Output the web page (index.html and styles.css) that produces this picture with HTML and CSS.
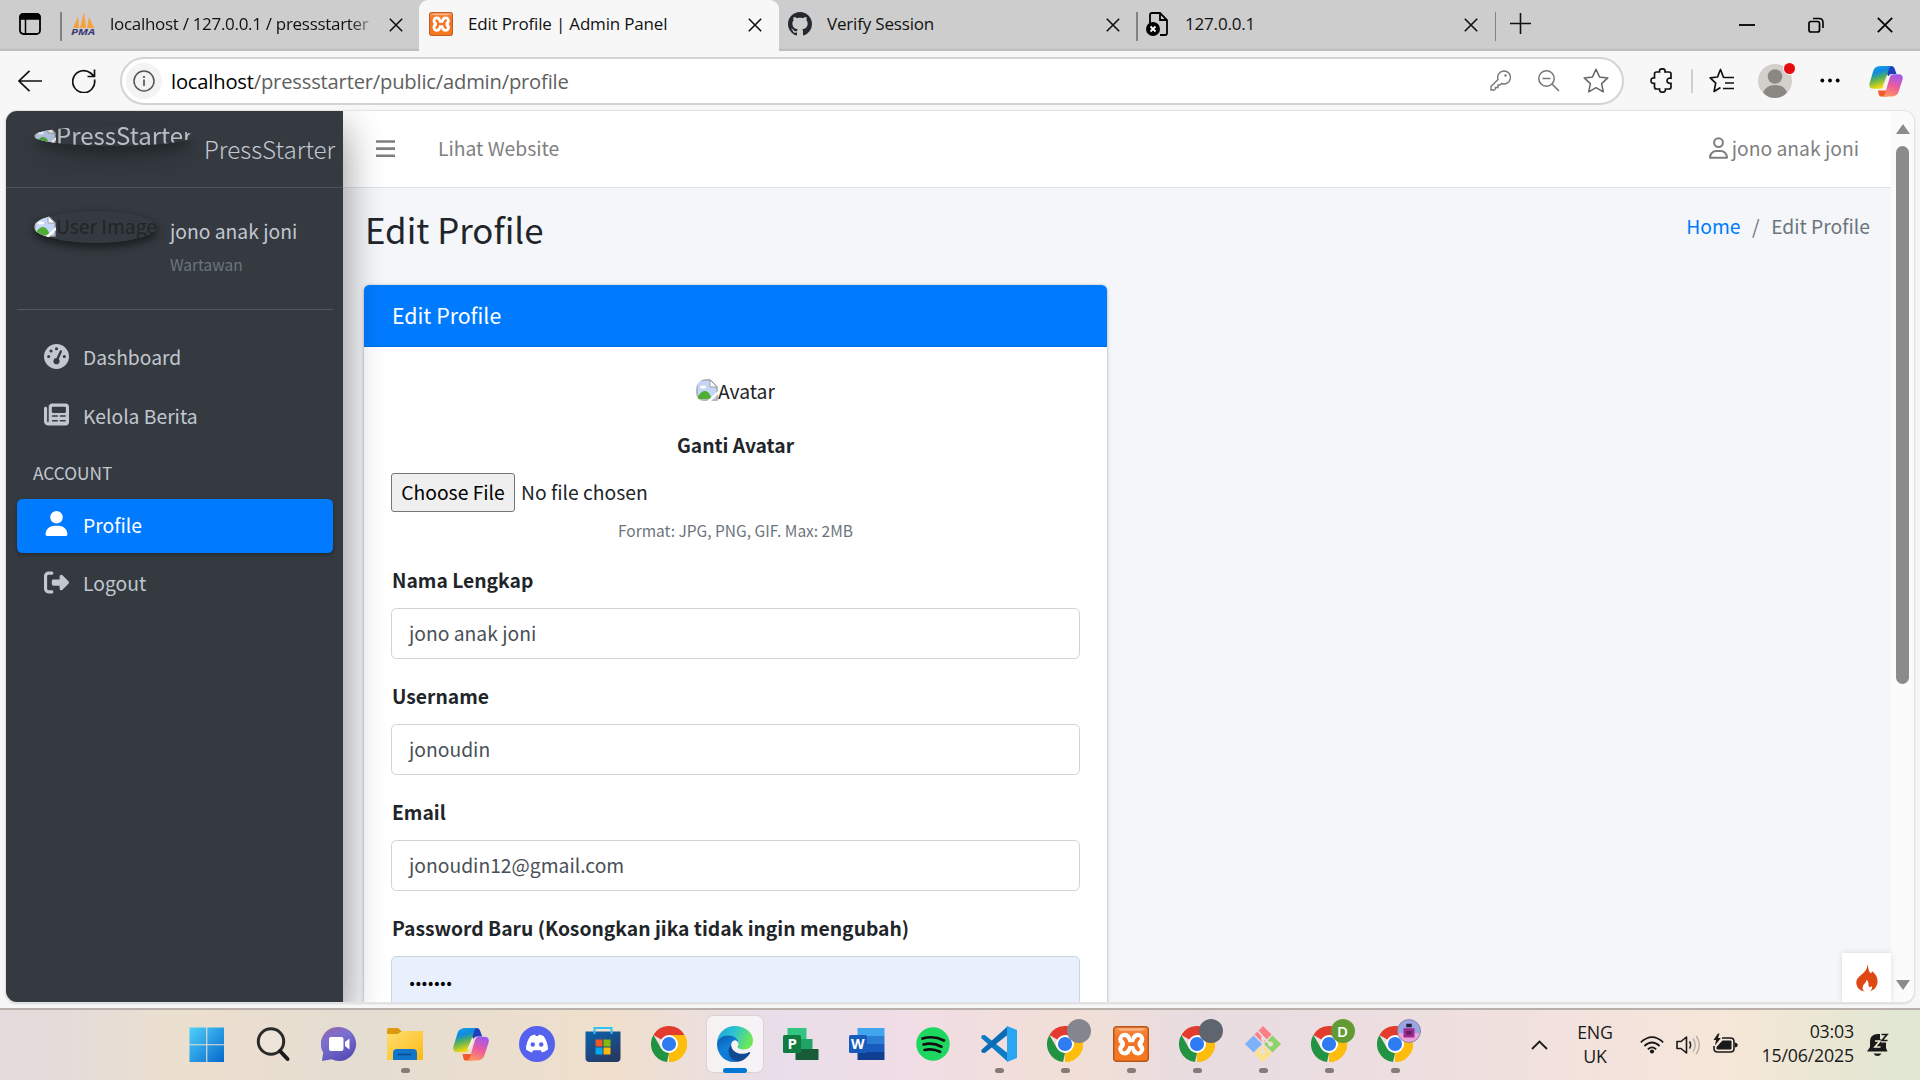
FILE: index.html
```html
<!DOCTYPE html>
<html lang="id">
<head>
<meta charset="utf-8">
<title>Edit Profile | Admin Panel</title>
<link rel="stylesheet" href="styles.css">
</head>
<body>
<svg class="defs" width="0" height="0" aria-hidden="true">
  <defs>
    <linearGradient id="cpA" x1="0" y1="0" x2="0.3" y2="1"><stop offset="0" stop-color="#1fa4ee"/><stop offset=".35" stop-color="#0d8be0"/><stop offset=".6" stop-color="#4fae62"/><stop offset="1" stop-color="#f5d90a"/></linearGradient>
    <linearGradient id="cpB" x1="0.5" y1="0" x2="0.2" y2="1"><stop offset="0" stop-color="#a558ea"/><stop offset=".5" stop-color="#ee5c9c"/><stop offset="1" stop-color="#fd9a5a"/></linearGradient>
    <linearGradient id="winG" x1="0" y1="0" x2="1" y2="1"><stop offset="0" stop-color="#4fd0fb"/><stop offset="1" stop-color="#0468cc"/></linearGradient>
    <linearGradient id="chatG" x1="0" y1="0" x2=".5" y2="1"><stop offset="0" stop-color="#9863a8"/><stop offset=".45" stop-color="#7a6fd0"/><stop offset="1" stop-color="#5a4fb8"/></linearGradient>
    <linearGradient id="foldG" x1="0" y1="0" x2="1" y2="1"><stop offset="0" stop-color="#ffdf70"/><stop offset="1" stop-color="#fbb916"/></linearGradient>
    <linearGradient id="storeG" x1="0" y1="0" x2=".6" y2="1"><stop offset="0" stop-color="#0a63ae"/><stop offset="1" stop-color="#263a66"/></linearGradient>
    <linearGradient id="edgeTop" x1="0" y1="0" x2="1" y2=".3"><stop offset="0" stop-color="#1f9fe0"/><stop offset=".5" stop-color="#2cc3d2"/><stop offset="1" stop-color="#6be65a"/></linearGradient>
    <linearGradient id="edgeMid" x1="0" y1="0" x2=".6" y2="1"><stop offset="0" stop-color="#0c59a4"/><stop offset=".5" stop-color="#0f80da"/><stop offset="1" stop-color="#1272cf"/></linearGradient>
    <linearGradient id="xamG" x1="0" y1="0" x2="0" y2="1"><stop offset="0" stop-color="#f9924a"/><stop offset=".3" stop-color="#f07427"/><stop offset="1" stop-color="#f47920"/></linearGradient>
    <symbol id="close" viewBox="0 0 14 14"><path d="M.8.8 13.2 13.2M13.2.8.8 13.2" fill="none" stroke="#111" stroke-width="1.6"/></symbol>
    <symbol id="xampp" viewBox="0 0 36 36"><rect x=".7" y=".7" width="34.6" height="34.6" rx="3" fill="url(#xamG)" stroke="#b8541a" stroke-width="1.4"/><path d="M4 2.500h28l-3 2H7z" fill="#fff" opacity=".4"/><g fill="#fff"><circle cx="11.800" cy="13.300" r="6.500"/><circle cx="11.800" cy="23" r="6.500"/><circle cx="24.800" cy="13.300" r="6.500"/><circle cx="24.800" cy="23" r="6.500"/><path d="M11 13h14.500v10H11z"/></g><path d="M11.300 12.800q2.500 1.700 2.500 5.300t-2.500 5.400M25.200 12.800q-2.500 1.700-2.500 5.300t2.500 5.400M14 18.100h8.500" fill="none" stroke="#f07427" stroke-width="3.600" stroke-linecap="round"/></symbol>
    <symbol id="copilot" viewBox="0 0 36 34"><path d="M15 1h8.500c2 0 3 1 3.700 3l2 5.500h-5c-2 0-3 1-3.600 3z" fill="#1d3fc0"/><path d="M9.500 27h9l3-10 2.500 5-3 9c-.6 1.700-1.500 2.500-3.200 2.500H13c-2 0-2.500-1-3.500-6.500z" fill="#f4582c"/><path d="M12.500 1H24c-2 .6-2.600 2-3.300 4.500L15.500 22c-.7 2.200-1.800 3.200-4 3.200H4.500C.8 25.200-.3 22.500.6 19L4.700 5.500C5.700 2.500 8.500 1 12.500 1z" fill="url(#cpA)"/><path d="M23.500 33.500H14c2-.4 2.600-2 3.300-4.300l4.700-16c.8-2.500 2-3.500 4.200-3.500h5.300c3.700 0 4.900 2.600 4 6l-4.200 13c-1 3.100-3.800 4.800-7.800 4.800z" fill="url(#cpB)"/><path d="m18.500 12.500-4.200 10c2.700-.5 3.700-1.500 4.400-3.800l1.500-5c.3-1 .8-1.900 1.600-2.600z" fill="#f3eeea"/></symbol>
    <symbol id="chrome" viewBox="0 0 36 36"><path d="M18 18 2.400 9A18 18 0 0 1 33.600 9z" fill="#e33b2e"/><path d="M18 18 33.600 9A18 18 0 0 1 18 36z" fill="#fdbd0a"/><path d="M2.400 9 10.200 22.500 18 27l-2 9A18 18 0 0 1 2.400 9z" fill="#229342"/><path d="M18 9h15.600A18 18 0 0 1 18 36l7.800-13.500z" fill="#fdbd0a"/><circle cx="18" cy="18" r="9" fill="#fff"/><circle cx="18" cy="18" r="7.100" fill="#2f7bf2"/></symbol>
    <symbol id="broken" viewBox="0 0 22 22"><path d="M1 1h13l7 7v13H1z" fill="#fff" stroke="#9aa0a6" stroke-width="1.500"/><path d="M2 2h12l6 6v12H2z" fill="#c4d5f5"/><path d="M14 1v7h7z" fill="#fff" stroke="#9aa0a6"/><path d="M2 20v-3c3-4 5-5 7-5 3 0 5 3 7 8z" fill="#4fae33"/><path d="m11 22 11-10v3l-7 7z" fill="#fff"/><ellipse cx="7" cy="8" rx="3" ry="1.500" fill="#fff"/></symbol>
  </defs>
</svg>

<div class="screen">
  <header class="tabs">
    <div class="workspace"><svg width="22" height="22" viewBox="0 0 22 22"><rect x="1" y="1" width="20" height="20" rx="3.500" fill="none" stroke="#000" stroke-width="1.800"/><path d="M1 6V4q0-3 3-3h14q3 0 3 3v2zM6.500 6v15" stroke="#000" stroke-width="1.500"/></svg></div>
    <div class="tab first">
      <svg class="fav" viewBox="0 0 24 24"><path d="M2 16 7 5l1 11zM9 16 13 0l2 16zM16 16l2-11 5 11z" fill="#f8a13c"/><text x="0" y="23" class="pma" textLength="24" lengthAdjust="spacingAndGlyphs">PMA</text></svg>
      <span class="title fade">localhost / 127.0.0.1 / pressstarter</span>
      <svg class="x"><use href="#close"/></svg>
    </div>
    <div class="tab active">
      <svg class="fav"><use href="#xampp"/></svg>
      <span class="title">Edit Profile | Admin Panel</span>
      <svg class="x"><use href="#close"/></svg>
    </div>
    <div class="tab">
      <svg class="fav" viewBox="0 0 16 16"><path fill="#24292f" d="M8 0C3.580 0 0 3.580 0 8c0 3.540 2.290 6.530 5.470 7.590.4.070.55-.17.55-.38 0-.19-.01-.82-.01-1.490-2.010.37-2.530-.49-2.690-.94-.09-.23-.48-.94-.82-1.130-.28-.15-.68-.52-.01-.53.63-.01 1.080.58 1.230.82.72 1.210 1.870.87 2.330.66.070-.52.28-.87.51-1.070-1.780-.2-3.640-.89-3.640-3.950 0-.87.31-1.590.82-2.150-.08-.2-.36-1.020.08-2.120 0 0 .67-.21 2.200.82.64-.18 1.320-.27 2-.27s1.360.09 2 .27c1.530-1.040 2.200-.82 2.200-.82.44 1.100.16 1.920.08 2.120.51.56.82 1.270.82 2.150 0 3.070-1.870 3.750-3.650 3.950.29.25.54.73.54 1.480 0 1.070-.01 1.930-.01 2.200 0 .21.15.46.55.38A8.010 8.010 0 0 0 16 8c0-4.420-3.580-8-8-8z"/></svg>
      <span class="title">Verify Session</span>
      <svg class="x"><use href="#close"/></svg>
    </div>
    <div class="tab divided">
      <svg class="fav" viewBox="0 0 24 24"><path d="M4 11V3q0-2 2-2h8l7 7v13q0 2-2 2h-5M14 1v7h7" fill="none" stroke="#000" stroke-width="1.800"/><circle cx="7" cy="17" r="7" fill="#000"/><path d="m4.500 14.500 5 5m0-5-5 5" stroke="#fff" stroke-width="1.800"/></svg>
      <span class="title">127.0.0.1</span>
      <svg class="x"><use href="#close"/></svg>
    </div>
    <svg class="plus" width="21" height="21"><path d="M10.500 0v21M0 10.500h21" stroke="#111" stroke-width="1.600"/></svg>
    <div class="winctl">
      <svg width="16" height="16"><path d="M0 8h16" stroke="#000" stroke-width="1.800"/></svg>
      <svg width="16" height="16" viewBox="0 0 16 16"><rect x="1" y="4.500" width="10.500" height="10.500" rx="2" fill="none" stroke="#000" stroke-width="1.700"/><path d="M5 1.500h6q4 0 4 4V11" fill="none" stroke="#000" stroke-width="1.600"/></svg>
      <svg width="16" height="16" viewBox="0 0 16 16"><path d="m.8.8 14.400 14.400m0-14.400L.8 15.200" stroke="#000" stroke-width="1.700"/></svg>
    </div>
  </header>

  <div class="toolbar">
    <svg class="back" width="24" height="22"><path d="M24 11H1M11.500.8 1 11l10.500 10.200" fill="none" stroke="#111" stroke-width="1.700"/></svg>
    <svg class="reload" width="24" height="24" viewBox="0 0 24 24"><path d="M22.500 10.500A11 11 0 1 1 18.500 4L22 7M22.500.5V7.500H15.500" fill="none" stroke="#111" stroke-width="1.700"/></svg>
    <div class="address">
      <span class="info"><svg width="22" height="22" viewBox="0 0 22 22"><circle cx="11" cy="11" r="10" fill="none" stroke="#555" stroke-width="1.500"/><path d="M11 9.500V16M11 6v2" stroke="#555" stroke-width="1.700"/></svg></span>
      <span class="url"><b>localhost</b>/pressstarter/public/admin/profile</span>
      <span class="addr-icons">
        <svg width="21" height="21" viewBox="0 0 21 21"><path d="M13.500 1a6.500 6.500 0 1 1-2 12.500L10 15H8v2.500H5.500V19L4 20H1v-3.500l7-7A6.500 6.500 0 0 1 13.500 1z" fill="none" stroke="#777" stroke-width="1.400"/><circle cx="15.500" cy="5.500" r="1.200" fill="#777"/></svg>
        <svg width="22" height="22" viewBox="0 0 22 22"><circle cx="8.500" cy="8.500" r="7.700" fill="none" stroke="#777" stroke-width="1.500"/><path d="M4.500 8.500h8M14 14l7 7" stroke="#777" stroke-width="1.600"/></svg>
        <svg class="star" width="26" height="25" viewBox="0 0 26 25"><path d="m13 1.300 3.500 7.600 8.300 1-6.200 5.700 1.700 8.200L13 19.700l-7.300 4.100 1.700-8.200L1.200 9.900l8.300-1z" fill="none" stroke="#666" stroke-width="1.500" stroke-linejoin="round"/></svg>
      </span>
    </div>
    <svg class="puzzle" width="24" height="25" viewBox="0 0 24 25"><path d="M4.500 6q0-2 2-2H9.500q-.5-3.200 2.800-3.200T15 4h4q2 0 2 2v4.200q-4-.4-4 2.500t4 2.600V19q0 2-2 2h-3.600q.4 3.200-2.900 3.200T9.600 21H6.500q-2 0-2-2v-3.600Q1 15.800 1 12.700t3.500-2.800z" fill="none" stroke="#111" stroke-width="1.700"/></svg>
    <i class="bar-sep"></i>
    <svg class="favs" width="26" height="25" viewBox="0 0 26 25"><path d="M15 9.200h-.5L11.500 1.500 8.500 9l-7.300.9 5.500 5.200-1.600 8.300 6.400-3.800M15 9.500h10M16 15h9M14 20.500h11" fill="none" stroke="#111" stroke-width="1.700" stroke-linejoin="round"/></svg>
    <div class="person"><svg width="34" height="34"><circle cx="17" cy="17" r="17" fill="#d3d0cb"/><circle cx="17" cy="12.500" r="7.300" fill="#8b8783"/><path d="M5 28.500q3-7.500 12-7.500t12 7.500Q24 34 17 34T5 28.500z" fill="#8b8783"/></svg><i></i></div>
    <svg class="dots" width="20" height="5"><circle cx="2.300" cy="2.500" r="1.900"/><circle cx="10" cy="2.500" r="1.900"/><circle cx="17.700" cy="2.500" r="1.900"/></svg>
    <svg class="cp" width="34" height="32"><use href="#copilot"/></svg>
  </div>

  <div class="frame">
   <div class="view">
    <aside class="sidebar">
      <a class="brand">
        <span class="alt-img logo"><svg width="22" height="22"><use href="#broken"/></svg>PressStarter</span>
        <span class="brand-text">PressStarter</span>
      </a>
      <div class="side-body">
        <div class="user-panel">
          <span class="alt-img avatar"><svg width="22" height="22"><use href="#broken"/></svg>User Image</span>
          <div class="who"><span>jono anak joni</span><small>Wartawan</small></div>
        </div>
        <nav class="menu">
          <a><svg width="25" height="25" viewBox="0 0 512 512"><path fill="currentColor" fill-rule="evenodd" d="M0 256a256 256 0 1 1 512 0A256 256 0 1 1 0 256zM288 96a32 32 0 1 0-64 0 32 32 0 1 0 64 0zM256 416c35.300 0 64-28.700 64-64 0-17.400-6.900-33.100-18.100-44.600L366 161.700c5.300-12.100-.2-26.300-12.300-31.600s-26.300.2-31.600 12.300L257.900 288H256c-35.300 0-64 28.700-64 64s28.700 64 64 64zM176 144a32 32 0 1 0-64 0 32 32 0 1 0 64 0zM96 288a32 32 0 1 0 0-64 32 32 0 1 0 0 64zm352-32a32 32 0 1 0-64 0 32 32 0 1 0 64 0z"/></svg><span>Dashboard</span></a>
          <a><svg width="25" height="25" viewBox="0 0 512 512"><path fill="currentColor" fill-rule="evenodd" d="M96 96c0-35.300 28.700-64 64-64h288c35.300 0 64 28.700 64 64v320c0 35.300-28.700 64-64 64H80c-44.200 0-80-35.800-80-80V128c0-17.700 14.300-32 32-32s32 14.300 32 32v272c0 8.800 7.200 16 16 16s16-7.200 16-16V96zm64 24v80c0 13.300 10.700 24 24 24h240c13.300 0 24-10.700 24-24v-80c0-13.300-10.700-24-24-24H184c-13.300 0-24 10.700-24 24zm16 152a16 16 0 0 0 0 32h96a16 16 0 0 0 0-32zm160 0a16 16 0 0 0 0 32h96a16 16 0 0 0 0-32zM176 368a16 16 0 0 0 0 32h96a16 16 0 0 0 0-32zm160 0a16 16 0 0 0 0 32h96a16 16 0 0 0 0-32z"/></svg><span>Kelola Berita</span></a>
          <span class="nav-header">ACCOUNT</span>
          <a class="on"><svg width="25" height="25" viewBox="-32 0 512 512"><path fill="currentColor" d="M224 256A128 128 0 1 0 224 0a128 128 0 1 0 0 256zm-45.700 48C79.800 304 0 383.800 0 482.300 0 498.700 13.300 512 29.700 512h388.600c16.400 0 29.700-13.300 29.700-29.700C448 383.800 368.200 304 269.700 304z"/></svg><span>Profile</span></a>
          <a><svg width="25" height="25" viewBox="0 0 512 512"><path fill="currentColor" d="M377.900 105.900 500.700 228.700c7.200 7.200 11.300 17.100 11.300 27.300s-4.100 20.100-11.300 27.300L377.900 406.100c-6.400 6.400-15 9.900-24 9.900-18.700 0-33.900-15.200-33.900-33.900V320H192c-17.700 0-32-14.300-32-32v-64c0-17.700 14.300-32 32-32h128v-62.100c0-18.700 15.200-33.900 33.900-33.900 9 0 17.600 3.600 24 9.900zM160 96H96c-17.700 0-32 14.300-32 32v256c0 17.700 14.300 32 32 32h64c17.700 0 32 14.300 32 32s-14.300 32-32 32H96c-53 0-96-43-96-96V128C0 75 43 32 96 32h64c17.700 0 32 14.300 32 32s-14.300 32-32 32z"/></svg><span>Logout</span></a>
        </nav>
      </div>
    </aside>

    <main class="content">
      <nav class="navbar">
        <svg width="19" height="18"><path d="M0 1.500h19M0 8.600h19M0 15.700h19" stroke="#7f7f7f" stroke-width="2.600"/></svg>
        <span class="site">Lihat Website</span>
        <span class="me"><svg width="19" height="22" viewBox="0 0 448 512"><path fill="#7f7f7f" d="M304 128a80 80 0 1 0-160 0 80 80 0 1 0 160 0zm-208 0a128 128 0 1 1 256 0A128 128 0 1 1 96 128zM49.300 464h349.500c-8.900-63.300-63.300-112-129-112h-91.400c-65.700 0-120.100 48.700-129 112zM0 482.300C0 383.800 79.800 304 178.300 304h91.400C368.200 304 448 383.800 448 482.300c0 16.400-13.300 29.700-29.700 29.700H29.700C13.300 512 0 498.700 0 482.300z"/></svg>jono anak joni</span>
      </nav>
      <div class="page-head">
        <h1>Edit Profile</h1>
        <div class="crumbs"><a>Home</a><i>/</i><span>Edit Profile</span></div>
      </div>
      <section class="card">
        <h3>Edit Profile</h3>
        <div class="card-body">
          <div class="pic"><span class="alt-img photo"><svg width="22" height="22"><use href="#broken"/></svg>Avatar</span></div>
          <label class="center">Ganti Avatar</label>
          <div class="file"><span class="choose">Choose File</span><span>No file chosen</span></div>
          <small class="hint">Format: JPG, PNG, GIF. Max: 2MB</small>
          <label>Nama Lengkap</label><div class="field">jono anak joni</div>
          <label>Username</label><div class="field">jonoudin</div>
          <label>Email</label><div class="field">jonoudin12@gmail.com</div>
          <label>Password Baru (Kosongkan jika tidak ingin mengubah)</label><div class="field filled"><span>•••••••</span></div>
        </div>
      </section>
      <div class="debug"><svg width="22" height="28" viewBox="0 0 22 28"><path d="M11 0c2 4 1 6 3 8.500 1 1 2 1 1.800-1.500C20 10 22 14 21.500 18.500 21 23 18 26 14 27.500c2-2 2.500-4 1.500-5.500-.5 1-1.500 1.500-2.300.8-1.500-1.300.5-3.800-2.700-7.300.3 2.500-3 4.500-3.500 6.500-1 2.500 0 4.500 1.500 5.500C3.500 26.500.5 23.500.3 19 0 13 6 11.500 9.500 6.500 11 4.500 11.500 2 11 0z" fill="#dd4814"/></svg></div>
    </main>
    <div class="scroll"><i class="up"></i><i class="thumb"></i><i class="down"></i></div>
   </div>
  </div>

  <footer class="taskbar">
    <div class="apps">
      <div class="app"><svg viewBox="0 0 36 36"><path d="M.5 1.500h16.700v16.700H.5zM18.300 1.500H35v16.700H18.300zM.5 19.300h16.700V36H.5zM18.300 19.300H35V36H18.300z" fill="url(#winG)"/></svg></div>
      <div class="app"><svg viewBox="0 0 36 36"><circle cx="16" cy="15.500" r="12.700" fill="#f2ece3" fill-opacity=".5" stroke="#2a2a2a" stroke-width="3"/><path d="m25 25 7.500 8" stroke="#1a1a1a" stroke-width="4" stroke-linecap="round"/></svg></div>
      <div class="app"><svg viewBox="0 0 36 36"><path d="M18 1a17 17 0 1 1-7.500 32.200L1 35l1.200-8.500A17 17 0 0 1 18 1z" fill="url(#chatG)"/><rect x="8" y="11" width="14.500" height="14" rx="2" fill="#fff"/><path d="m24 16 4.500-3.500v11L24 20z" fill="#fff"/></svg></div>
      <div class="app run"><svg viewBox="0 0 36 36"><path d="M0 4q0-2 2-2h9l4 3.500L11 8H0z" fill="#dd9a0c"/><path d="M0 8h11l4-3h21v29H0z" fill="url(#foldG)"/><path d="M6 34V27q0-4 4-4h16q4 0 4 4v7z" fill="#0f76ca"/><path d="M10.500 28.500h14" stroke="#064f93" stroke-width="1.700"/></svg></div>
      <div class="app"><svg><use href="#copilot"/></svg></div>
      <div class="app"><svg viewBox="0 0 36 36"><circle cx="18" cy="18" r="18" fill="#5562ee"/><path d="M11.500 10q3-1.300 4.500-1.400l.8 1.400h2.400l.8-1.400Q21.500 8.700 24.500 10 29 16 29 23.500q-2.500 2.200-6 3l-1.300-2.200h-7.400L13 26.500q-3.500-.8-6-3Q7 16 11.500 10z" fill="#fff"/><circle cx="13.800" cy="18.500" r="2.200" fill="#5562ee"/><circle cx="22.200" cy="18.500" r="2.200" fill="#5562ee"/></svg></div>
      <div class="app"><svg viewBox="0 0 36 36"><path d="M.5 5.500h35V32q0 4-4 4h-27q-4 0-4-4z" fill="url(#storeG)"/><path d="M9.500 8V2h17v6" fill="none" stroke="#2fc3f4" stroke-width="2"/><path d="M10.500 13.500h7v7h-7z" fill="#f35325"/><path d="M18.500 13.500h7v7h-7z" fill="#81bc06"/><path d="M10.500 21.500h7v7h-7z" fill="#05a6f0"/><path d="M18.500 21.500h7v7h-7z" fill="#ffba08"/></svg></div>
      <div class="app"><svg><use href="#chrome"/></svg></div>
      <div class="app current"><svg viewBox="0 0 36 36"><path d="M0 18C0 7 8.500 0 18 0c10 0 18 6.500 18 14.500 0 6-4.500 9-9 9-4 0-6.500-1.500-6.500-2.600 0-.8 1-1.400 1-3.400 0-3.500-3.500-6.500-8.500-6.500C6 11 1 14 0 18z" fill="url(#edgeTop)"/><path d="M0 18C.5 12.500 6 9.500 11.500 9.500c6.500 0 10 4 10 8-1-3-3-3.500-4.500-3-2.500 1-3.500 4-3 7.500.8 5.500 5 10 11 10-2.500 2.500-5 4-8 4C7 36 0 28 0 18z" fill="url(#edgeMid)"/><path d="M14 18.500c-5 6-2 15.500 6.500 17.300 5-.5 9.500-3.500 12.500-8.500.5-1-.3-1.500-1.200-1-7 3.500-17 1.200-17.800-7.800z" fill="#114a93"/></svg></div>
      <div class="app"><svg viewBox="0 0 36 36"><path d="M4.500 2h19v11h-19z" fill="#33c481"/><path d="M12 13h17.500v11H12z" fill="#21a366"/><path d="M12.500 23h23v11h-23z" fill="#185c37"/><rect x="0" y="9" width="18" height="18" rx="1.500" fill="#107c41"/><text x="4.500" y="23" class="glyph">P</text></svg></div>
      <div class="app"><svg viewBox="0 0 36 36"><path d="M8.500 2h27v8h-27z" fill="#41a5ee"/><path d="M8.500 10h27v8h-27z" fill="#2b7cd3"/><path d="M8.500 18h27v8h-27z" fill="#185abd"/><path d="M8.500 26h27v8h-27z" fill="#103f91"/><rect x="0" y="9" width="18" height="18" rx="1.500" fill="#185abd"/><text x="2" y="23" class="glyph w">W</text></svg></div>
      <div class="app"><svg viewBox="0 0 36 36"><circle cx="18" cy="18" r="16.700" fill="#1ed760"/><path d="M7.500 12.500q11-3.300 21.500 2M8.500 18.500q9.500-2.500 18 2.200M9.500 24q8-1.900 15.500 1.800" fill="none" stroke="#111" stroke-width="2.700" stroke-linecap="round"/></svg></div>
      <div class="app run"><svg viewBox="0 0 36 36"><path d="M1.200 9.200 3.800 9 27 27.500V36L.8 12.500Q-.5 11 1.200 9.200z" fill="#0a7bc4"/><path d="M1.200 26.800 3.800 27 27 8.500V0L.8 23.500Q-.5 25 1.200 26.800z" fill="#0b6cb4"/><path d="M26 0l10 4v28l-10 4z" fill="#29a5f3"/></svg></div>
      <div class="app run"><svg><use href="#chrome"/></svg><i class="badge gray"></i></div>
      <div class="app run"><svg><use href="#xampp"/></svg></div>
      <div class="app run"><svg><use href="#chrome"/></svg><i class="badge slate"></i></div>
      <div class="app run"><svg viewBox="0 0 36 36"><path d="m18 0 8.500 8.500L18 17 9.500 8.500z" fill="#fb7f85"/><path d="m27.500 9.500 8.500 8.500-8.500 8.500L19 18z" fill="#8fd269"/><path d="m8.500 9.500 8.500 8.500-8.500 8.500L0 18z" fill="#7fb1fb"/><path d="m18 19 8.500 8.500L18 36l-8.500-8.500z" fill="#fde283"/><path d="m13 5 5 6v14M18 11l7 7" stroke="#eadfe2" stroke-width="1.800" fill="none"/><circle cx="18" cy="26" r="2.500" fill="#eadfe2"/><circle cx="25.500" cy="18" r="2.500" fill="#eadfe2"/><circle cx="18" cy="13" r="2" fill="#eadfe2"/></svg></div>
      <div class="app run"><svg><use href="#chrome"/></svg><i class="badge green">D</i></div>
      <div class="app run"><svg><use href="#chrome"/></svg><i class="badge pink"><svg viewBox="0 0 24 24"><path d="M9 4h6v4H9z" fill="#2a2340"/><path d="M6 9h12v10H6z" fill="#a02a8e"/><path d="M9 12h6v4H9z" fill="#6a1c68"/></svg></i></div>
    </div>
    <div class="tray">
      <svg class="chev" width="17" height="10"><path d="m1 9 7.500-7.500L16 9" fill="none" stroke="#1a1a1a" stroke-width="1.800"/></svg>
      <div class="lang"><span>ENG</span><span>UK</span></div>
      <div class="status">
        <svg width="24" height="18" viewBox="0 0 24 18"><path d="M.8 6.300q11.200-10.500 22.400 0M4.400 10q7.600-7 15.200 0M7.800 13.300q4.200-3.800 8.400 0" fill="none" stroke="#1a1a1a" stroke-width="1.700"/><circle cx="12" cy="15.500" r="2.100" fill="#1a1a1a"/></svg>
        <svg width="25" height="20" viewBox="0 0 25 20"><path d="M1 6.500h4L10.500 2v16L5 13.500H1z" fill="none" stroke="#1a1a1a" stroke-width="1.600" stroke-linejoin="round"/><path d="M13.500 6.500q2.300 3.500 0 7" fill="none" stroke="#1a1a1a" stroke-width="1.500"/><path d="M17 3.500q4.500 6.500 0 13M20.300 1q6 9 0 18" fill="none" stroke="#b9aea4" stroke-width="1.400"/></svg>
        <svg class="batt" width="25" height="20" viewBox="0 0 25 20"><path d="M9 4h8.500q3.500 0 3.500 3.500v7q0 3.500-3.500 3.500h-13Q1 18 1 14.500V12" fill="none" stroke="#1a1a1a" stroke-width="1.600"/><path d="M9.500 6.500h8q1 0 1 1v7q0 1-1 1H4.500q-1 0-1-1V13z" fill="#1a1a1a"/><path d="M22 8.500q2.800.5 2.800 2.500T22 13.500z" fill="#1a1a1a"/><path d="M5-.5.5 6H3L2 11.500 7.800 4H5L6.500-.5z" fill="#1a1a1a"/></svg>
      </div>
      <div class="clock"><span>03:03</span><span>15/06/2025</span></div>
      <svg class="bell" width="22" height="24" viewBox="0 0 22 24"><path d="M0 18.500 3 14V8q0-6 7-7h3v5h6v9l1.500 3.500z" fill="#1a1a1a"/><path d="M6.500 20.500h8Q13 23 10.500 23t-4-2.500z" fill="#1a1a1a"/><path d="M8 8h5l-5 6h5.500" fill="none" stroke="#f0e8d6" stroke-width="1.700"/><path d="M13 0h8.500v9.500H14z" fill="#eae7d4"/><path d="M14.500 1.500H20L15 7.500h5.500" fill="none" stroke="#1a1a1a" stroke-width="1.700"/></svg>
    </div>
  </footer>
</div>
</body>
</html>
```
FILE: styles.css
```css
* { box-sizing: border-box; }
body { margin: 0; }
svg { display: block; flex: none; }
.defs { position: absolute; }
i { font-style: normal; }

.screen {
  width: 1920px; height: 1080px; overflow: hidden;
  display: flex; flex-direction: column;
  background: #f7f7f7; color: #212529;
  font-family: "Open Sans", "Noto Sans", sans-serif;
}

/* Browser tab strip */
.tabs {
  height: 51px; flex: none; display: flex; align-items: flex-start;
  background: #cdcdcd; box-shadow: inset 0 -2px 1px #bdbdbd;
  font-size: 17px; color: #111;
}
.workspace { width: 62px; height: 29px; margin-top: 12px; padding: 1px 0 0 19px; border-right: 2px solid #828282; }
.tab { width: 358px; height: 51px; display: flex; align-items: center; padding: 0 17px 3px 9px; }
.tab.first { width: 357px; padding-right: 16px; }
.tab.active { width: 360px; background: #f7f7f7; border-radius: 9px 9px 0 0; padding-left: 10px; }
.tab.divided { position: relative; }
.tab.divided::before, .tab.divided::after { content: ""; position: absolute; top: 12px; width: 1.500px; height: 29px; background: #828282; }
.tab.divided::before { left: -1px; }
.tab.divided::after { right: -1px; }
.fav { width: 24px; height: 24px; overflow: visible; }
.title { flex: 1; margin-left: 15px; white-space: nowrap; overflow: hidden; letter-spacing: -.18px; line-height: 26px; }
.fade { -webkit-mask-image: linear-gradient(90deg, #000 88%, transparent); mask-image: linear-gradient(90deg, #000 88%, transparent); margin-right: 8px; letter-spacing: -.3px; }
.x { width: 14px; height: 14px; margin-top: 2px; }
.pma { font: italic bold 9.500px "Open Sans", sans-serif; fill: #3a3a78; }
.plus { margin: 13px 0 0 15px; }
.winctl { margin: 17px 27px 0 auto; display: flex; gap: 53px; }

/* Address row */
.toolbar { height: 59px; flex: none; display: flex; align-items: center; padding-left: 18px; }
.reload { margin-left: 30px; }
.address {
  width: 1504px; height: 48px; margin-left: 24px; display: flex; align-items: center;
  background: #fff; border: 2px solid #d3d3d3; border-radius: 24px; padding: 0 13px 0 4px;
}
.info { width: 36px; height: 36px; border-radius: 50%; background: #f3f3f3; display: grid; place-items: center; }
.url { margin: 1px 0 0 9px; font-size: 20.200px; line-height: 30px; color: #606060; letter-spacing: -.2px; white-space: nowrap; }
.url b { font-weight: 400; color: #000; }
.addr-icons { margin-left: auto; display: flex; align-items: center; gap: 27px; }
.star { margin-left: -4px; }
.puzzle { margin-left: 26px; }
.bar-sep { width: 2px; height: 24px; margin-left: 17px; background: #d0d0d0; }
.favs { margin-left: 16px; }
.person { position: relative; margin-left: 23px; }
.person i { position: absolute; right: -3px; top: -1px; width: 11px; height: 11px; border-radius: 50%; background: #e80b0b; box-shadow: 0 0 0 1px #f7f7f7; }
.dots { margin-left: 28px; }
.cp { margin-left: 29px; }

/* Web page viewport */
.frame { height: 898px; flex: none; padding: 1px 6px 7px 6px; }
.view {
  height: 891px; display: flex; overflow: hidden; position: relative;
  border-radius: 11px; background: #f4f6f9; box-shadow: 0 0 0 1px #e3e3e3, 0 1px 2px 1px #d8d8d8;
  font-family: "Noto Sans CJK SC", "Noto Sans", sans-serif; font-size: 19.300px; line-height: 32.400px;
}
.sidebar {
  width: 337px; flex: none; background: #343a40; color: #c2c7d0; position: relative; z-index: 2;
  box-shadow: 0 19px 38px rgba(0,0,0,.25), 0 14px 38px rgba(0,0,0,.22);
}
.brand { height: 77px; display: flex; align-items: flex-start; padding: 15px 0 0 28px; border-bottom: 1px solid #4b545c; white-space: nowrap; }
.alt-img { display: flex; overflow: hidden; white-space: nowrap; flex: none; }
.logo { width: 159px; height: 20px; border-radius: 50%; font-size: 24px; line-height: 18px; opacity: .85; color: #d0d4db; box-shadow: 0 13px 26px rgba(0,0,0,.25), 0 8px 8px rgba(0,0,0,.25); }
.logo svg { margin-top: -1px; }
.brand-text { margin-left: 11px; font-size: 24.200px; font-weight: 300; line-height: 46px; }
.side-body { padding: 0 10px 0 11px; }
.user-panel { height: 122px; display: flex; padding: 23px 0 0 17px; border-bottom: 1px solid #4f5962; }
.avatar { width: 123px; height: 32px; border-radius: 50%; color: #212529; line-height: 31px; box-shadow: 0 4px 8px rgba(0,0,0,.3), 0 4px 8px rgba(0,0,0,.3); }
.avatar svg { margin-top: 4px; }
.who { margin-left: 13px; display: flex; flex-direction: column; padding-top: 4px; }
.who small { color: #6c757d; font-size: 15.500px; line-height: 34px; }
.menu { display: flex; flex-direction: column; gap: 4.300px; padding-top: 21.500px; }
.menu a { height: 54px; padding-left: 27px; display: flex; align-items: center; gap: 14px; border-radius: 5.400px; }
.menu a svg { margin-top: -4px; }
.menu a span { margin-top: -2px; }
.menu a.on { background: #007bff; color: #fff; box-shadow: 0 2px 4px rgba(0,0,0,.3); }
.nav-header { height: 46.500px; padding-left: 16px; font-size: 17.300px; line-height: 50px; }

.content { flex: 1; min-width: 0; position: relative; }
.navbar { height: 77px; display: flex; align-items: center; padding: 0 32px 1px 33px; background: #fff; border-bottom: 1px solid #dee2e6; color: #7f7f7f; }
.site { margin-left: 43px; }
.me { margin-left: auto; display: flex; align-items: center; gap: 4px; }
.me svg { margin-top: -2px; }
.page-head { height: 97px; padding: 19px 21px 0 22px; display: flex; justify-content: space-between; }
h1 { margin: 0; font-size: 34.800px; font-weight: 400; line-height: 45px; }
.crumbs { display: flex; gap: 11.500px; color: #6c757d; line-height: 38px; }
.crumbs a { color: #007bff; }
.card { width: 743px; height: 900px; margin-left: 21px; background: #fff; border-radius: 5.400px; box-shadow: 0 0 1.500px rgba(0,0,0,.25), 0 1px 4px rgba(0,0,0,.2); }
h3 { margin: 0; height: 62px; padding-left: 28px; background: #007bff; border-bottom: 1px solid #006fe6; color: #fff; border-radius: 5.400px 5.400px 0 0; font-size: 21.300px; font-weight: 400; line-height: 59px; }
.card-body { padding: 28px 27px 0; display: flex; flex-direction: column; }
.pic { display: flex; justify-content: center; height: 54px; }
.photo { height: 32px; border-radius: 8px 0 0 12px; }
.photo svg { margin-top: 4px; border-radius: 10px 0 0 8px; }
label { font-weight: 700; margin: 0 0 11.300px; padding-left: 1px; }
.center { text-align: center; padding: 0; }
.file { display: flex; gap: 6px; align-items: center; height: 40px; margin-top: -1px; }
.choose { width: 124px; height: 39px; border: 1.500px solid #767676; border-radius: 3px; background: #efefef; color: #000; text-align: center; line-height: 36px; margin-top: 1px; }
.hint { text-align: center; color: #6c757d; font-size: 15.500px; line-height: 36px; margin-bottom: 16.500px; }
.field { height: 51.300px; margin-bottom: 21.100px; border: 1px solid #ced4da; border-radius: 5.400px; padding-left: 17px; color: #495057; line-height: 49px; }
.filled { background: #e8f0fe; color: #000; padding-left: 16px; }
.filled span { font: 14px/50px "DejaVu Sans", sans-serif; letter-spacing: -2.100px; }
.debug { position: absolute; right: 0; bottom: 0; width: 49px; height: 49px; background: #fff; display: grid; place-items: center; box-shadow: 0 0 6px rgba(0,0,0,.12); }
.scroll { width: 23px; background: #fbfbfb; display: flex; flex-direction: column; align-items: center; padding: 13px 0 12px; }
.up { border: 7.500px solid transparent; border-top: 0; border-bottom: 10px solid #8b8b8b; }
.thumb { width: 13px; height: 538px; margin-top: 12px; border-radius: 7px; background: #8b8b8b; }
.down { margin-top: auto; border: 7.500px solid transparent; border-bottom: 0; border-top: 10px solid #8b8b8b; }

/* Windows taskbar */
.taskbar {
  height: 72px; flex: none; display: flex; justify-content: space-between; border-top: 2px solid #b9b0ac;
  background: linear-gradient(90deg, #e3dadb 0, #e4dbda 50px, #ebdfcf 170px, #ebdecf 220px, #e4ddd1 360px, #f0dfcc 610px, #e8deea 780px, #f1dde5 910px, #f1dfd6 1080px, #e8dce1 1200px, #eddee0 1400px, #f4e3dc 1620px, #f5e7d8 1740px, #e1e7d2 1900px);
}
.apps { display: flex; margin-left: 173.500px; }
.app { width: 66px; position: relative; padding: 16px 0 0 15px; }
.app > svg { width: 36px; height: 36px; position: relative; }
.app.run::after { content: ""; position: absolute; left: 29px; bottom: 7px; width: 9px; height: 5px; border-radius: 3px; background: #857c77; }
.app.current::before { content: ""; position: absolute; left: 5px; top: 6px; width: 56px; height: 56px; border-radius: 6px; background: rgba(255,255,255,.6); box-shadow: 0 0 2px rgba(0,0,0,.2); }
.app.current::after { content: ""; position: absolute; left: 21px; bottom: 7px; width: 24px; height: 5px; border-radius: 3px; background: #0078d4; }
.badge { position: absolute; left: 35px; top: 9px; width: 24px; height: 24px; border-radius: 50%; overflow: hidden; text-align: center; }
.gray { background: #83868c; }
.slate { background: #5f656f; }
.green { background: #629b35; color: #fff; font: 600 15px/24px "Open Sans", sans-serif; }
.pink { background: linear-gradient(#9aa5e4 60%, #eba3dc 60%); border: 1px solid #8b84a8; }
.glyph { font: bold 15px "Open Sans", sans-serif; fill: #fff; }
.glyph.w { font-size: 14px; }
.tray { display: flex; align-items: center; padding: 0 31px 0 0; font-size: 17.800px; line-height: 24px; color: #1a1a1a; letter-spacing: -.2px; }
.lang { width: 60px; margin-left: 17px; display: flex; flex-direction: column; text-align: center; margin-top: -2px; }
.status { display: flex; gap: 12px; align-items: center; margin-left: 15px; }
.batt { margin-top: -2px; overflow: visible; }
.clock { width: 116px; display: flex; flex-direction: column; text-align: right; margin-top: -4px; }
.bell { margin-left: 13px; }
```
